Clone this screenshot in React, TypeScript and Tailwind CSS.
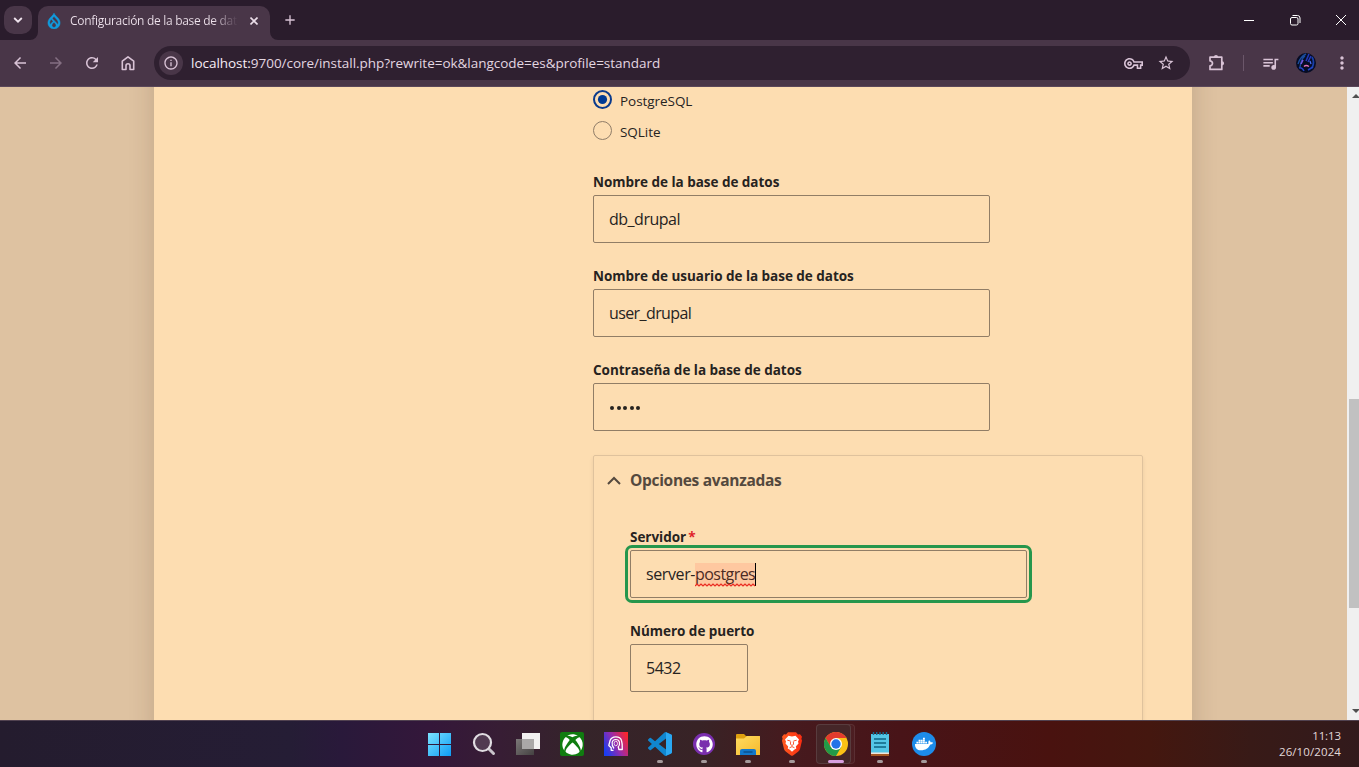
import type { ReactNode } from "react";
import { FaXbox, FaGithub, FaDocker } from "react-icons/fa";
import { SiDrupal } from "react-icons/si";
import {
  MdArrowBack,
  MdArrowForward,
  MdRefresh,
  MdInfoOutline,
  MdOutlineVpnKey,
  MdStarBorder,
  MdQueueMusic,
  MdMoreVert,
  MdAdd,
} from "react-icons/md";

function TitleBar() {
  return (
    <div className="flex h-10 shrink-0 bg-[#2a1c2c] pl-1">
      <div className="mt-1.5 flex h-7 w-7 items-center justify-center rounded-[10px] bg-[#493648] text-[#f0e4ee]">
        <svg width="10" height="6" viewBox="0 0 10 6" fill="none" stroke="currentColor" strokeWidth="1.800">
          <path d="M1.200 1L5 4.700 8.800 1" />
        </svg>
      </div>
      <div className="relative ml-1.5 mt-1.5 flex h-[34px] w-[232px] items-center rounded-t-[10px] bg-[#493648] pb-[5px]">
        <svg className="absolute -left-2 bottom-0" width="8" height="8" viewBox="0 0 8 8">
          <path d="M8 0v8H0a8 8 0 0 0 8-8z" fill="#493648" />
        </svg>
        <svg className="absolute -right-2 bottom-0" width="8" height="8" viewBox="0 0 8 8">
          <path d="M0 0v8h8a8 8 0 0 1-8-8z" fill="#493648" />
        </svg>
        <SiDrupal className="ml-2 text-[#109cde]" size={16} stroke="currentColor" strokeWidth={0.7} />
        <span className="ml-2 w-[168px] overflow-hidden whitespace-nowrap bg-gradient-to-r from-[#eee2ec] from-85% to-[#493648] bg-clip-text text-[12px] tracking-[-0.3px] text-transparent">
          Configuración de la base de datos
        </span>
        <svg className="ml-3" width="8" height="8" viewBox="0 0 8 8" stroke="#eadde8" strokeWidth="1.600">
          <path d="M.5.5l7 7M7.500.5l-7 7" />
        </svg>
      </div>
      <MdAdd className="ml-3 mt-[12px] text-[#d9c3d6]" size={16} />
      <div className="ml-auto flex h-10 items-center text-white">
        <svg width="12" height="12" viewBox="0 0 12 12" className="mr-[34px]">
          <path d="M1 6.500h10" stroke="#fff" />
        </svg>
        <svg width="12" height="12" viewBox="0 0 12 12" fill="none" stroke="#fff" className="mr-[34px]">
          <rect x="1.500" y="3.500" width="7.500" height="7.500" rx="1.500" />
          <path d="M3.500 1.500H8.500a2.500 2.500 0 0 1 2.500 2.500v5" />
        </svg>
        <svg width="12" height="12" viewBox="0 0 12 12" stroke="#fff" className="mr-[12px]">
          <path d="M1 1l10 10M11 1L1 11" />
        </svg>
      </div>
    </div>
  );
}

function Avatar() {
  return (
    <svg width="20" height="20" viewBox="0 0 20 20">
      <clipPath id="avatar">
        <circle cx="10" cy="10" r="10" />
      </clipPath>
      <g clipPath="url(#avatar)" fill="none">
        <rect width="20" height="20" fill="#060c24" />
        <path d="M2 11Q4 4 10 1M4 14Q5 6 9 3" stroke="#1a4c9c" strokeWidth="1.400" />
        <path d="M10 8L13 1M12 9l3-6" stroke="#2337b5" strokeWidth="1.600" />
        <path d="M16 4q3 5 0 11" stroke="#183fa8" strokeWidth="1.800" />
        <path d="M3 15q3-1 5 3M12 17l5-3" stroke="#1f43c4" strokeWidth="1.500" />
        <path d="M5 11l2-4" stroke="#7a55e0" strokeWidth="1.500" />
        <path d="M8 13.500q2-2 5 0" stroke="#e070b8" strokeWidth="1.300" />
        <path d="M14 8l1 3" stroke="#4a6cf0" strokeWidth="1.300" />
      </g>
    </svg>
  );
}

function HomeIcon() {
  return (
    <svg className="ml-[18px]" width="18" height="18" viewBox="0 0 18 18" fill="none" stroke="currentColor" strokeWidth="1.600">
      <path d="M3.300 7.200L9 2.800l5.700 4.400v8.300h-3.700v-3.700a2 2 0 0 0-4 0v3.700H3.300z" strokeLinejoin="round" />
    </svg>
  );
}

function ExtensionIcon() {
  return (
    <svg className="ml-[18px]" width="18" height="18" viewBox="0 0 18 18">
      <path
        d="M2 3.200h11.800v12.200H2v-3.600a2.500 2.500 0 0 0 0-5z"
        fill="none"
        stroke="currentColor"
        strokeWidth="1.700"
        strokeLinejoin="round"
      />
      <path d="M5.900 3a2.100 2.100 0 0 1 4.200 0zM14 7.200a2.100 2.100 0 0 1 0 4.200z" fill="currentColor" />
    </svg>
  );
}

function Toolbar() {
  return (
    <div className="flex h-[47px] shrink-0 items-center border-b border-[#5a4759] bg-[#493648] text-[#d9c3d6]">
      <MdArrowBack className="ml-[11px]" size={18} />
      <MdArrowForward className="ml-[18px] text-[#846f82]" size={18} />
      <MdRefresh className="ml-[18px]" size={18} />
      <HomeIcon />
      <div className="ml-[17px] flex h-[34px] w-[1036px] items-center rounded-full bg-[#2f2030] pl-[5px]">
        <div className="flex h-6 w-6 items-center justify-center rounded-full bg-[#493648]">
          <MdInfoOutline size={16} />
        </div>
        <span className="ml-2 mt-px whitespace-nowrap text-[13.500px] tracking-[-0.03px] text-[#e3d6e1]">
          <span className="text-[#f7edf5]">localhost:</span>9700/core/install.php?rewrite=ok&amp;langcode=es&amp;profile=standard
        </span>
        <MdOutlineVpnKey className="ml-auto" size={19} />
        <MdStarBorder className="ml-[14px] mr-[15px]" size={18} />
      </div>
      <ExtensionIcon />
      <div className="ml-[17px] h-4 w-px bg-[#6b576a]" />
      <MdQueueMusic className="ml-[17px]" size={19} />
      <div className="ml-4">
        <Avatar />
      </div>
      <MdMoreVert className="ml-4" size={20} />
    </div>
  );
}

function Radio({ label, checked }: { label: string; checked?: boolean }) {
  return (
    <div className="flex h-[31px] items-center">
      <svg width="19" height="19" viewBox="0 0 19 19" fill="none" className="-mt-0.5">
        {checked ? (
          <>
            <circle cx="9.500" cy="9.500" r="8.500" stroke="#0a3a8c" strokeWidth="2" />
            <circle cx="9.500" cy="9.500" r="4.600" fill="#003a94" />
          </>
        ) : (
          <circle cx="9.500" cy="9.500" r="9" stroke="#8f7c68" />
        )}
      </svg>
      <span className="ml-2 mt-px text-[13.500px] tracking-[-0.05px]">{label}</span>
    </div>
  );
}

function Field({ label, required, width, focused, children }: {
  label: string;
  required?: boolean;
  width: string;
  focused?: boolean;
  children: ReactNode;
}) {
  return (
    <div className="mb-6 h-[70px]">
      <div className="h-[22px] whitespace-nowrap text-[13.500px] font-bold leading-[19px] tracking-[-0.03px]">
        {label}
        {required && <span className="ml-[2px] text-[#e01f2b]">*</span>}
      </div>
      <div
        className={`flex h-12 items-center rounded-[2px] border border-[#917d66] px-[15px] text-[16px] ${width} ${
          focused ? "outline-3 outline-offset-2 outline-[#26964c]" : ""
        }`}
      >
        {children}
      </div>
    </div>
  );
}

function Page() {
  return (
    <div className="flex h-[633px] shrink-0 overflow-hidden bg-[#dec2a1] text-[#26231f]">
      <div className="-my-6 ml-[154px] w-[1038px] bg-[#fdddb1] pl-[439px] pt-6 shadow-[0_0_24px_rgba(60,40,20,0.18)]">
        <div className="-mt-[2px] mb-[28px]">
          <Radio label="PostgreSQL" checked />
          <Radio label="SQLite" />
        </div>
        <div className="-mt-[2px]">
          <Field label="Nombre de la base de datos" width="w-[397px]">
            <span className="tracking-[-0.5px]">db_drupal</span>
          </Field>
          <Field label="Nombre de usuario de la base de datos" width="w-[397px]">
            <span className="tracking-[-0.6px]">user_drupal</span>
          </Field>
          <Field label="Contraseña de la base de datos" width="w-[397px]">
            <span className="flex gap-[2.500px] pl-px pt-0.5">
              {[0, 1, 2, 3, 4].map((dot) => (
                <span key={dot} className="h-1 w-1 rounded-full bg-[#26231f]" />
              ))}
            </span>
          </Field>
        </div>
        <div className="h-[320px] w-[550px] rounded-[2px] border border-[#dfc29d] pl-9 shadow-[0_2px_4px_rgba(0,0,0,0.08)]">
          <div className="-ml-[23px] flex h-[49px] items-center text-[#54493e]">
            <svg width="14" height="9" viewBox="0 0 14 9" fill="none" stroke="#54493e" strokeWidth="2" className="-mt-px">
              <path d="M1 8l6-6 6 6" />
            </svg>
            <span className="mt-px ml-[9px] text-[15.500px] font-bold tracking-[-0.31px]">Opciones avanzadas</span>
          </div>
          <div className="mt-[23px]">
            <Field label="Servidor" required width="w-[397px]" focused>
              <span className="tracking-[-0.4px]">server-</span>
              <span className="relative h-[23px] border-r border-black bg-[#fec8a0] leading-[23px] tracking-[-0.55px] text-[#4c2b24]">
                postgres
                <svg className="absolute bottom-[-1px] left-0" width="61" height="4" viewBox="0 0 61 4" fill="none">
                  <path
                    d="M0 3l2-2 2 2 2-2 2 2 2-2 2 2 2-2 2 2 2-2 2 2 2-2 2 2 2-2 2 2 2-2 2 2 2-2 2 2 2-2 2 2 2-2 2 2 2-2 2 2 2-2 2 2 2-2 2 2 2-2 2 2"
                    stroke="#ea2d23"
                    strokeWidth="1.200"
                  />
                </svg>
              </span>
            </Field>
            <Field label="Número de puerto" width="w-[118px]">
              <span className="tracking-[-0.5px]">5432</span>
            </Field>
          </div>
        </div>
      </div>
      <div className="ml-auto flex h-full w-3 flex-col items-end bg-[#f0f0f0]">
        <svg className="mt-[7px]" width="7" height="4" viewBox="0 0 7 4">
          <path d="M0 4l4-4 4 4z" fill="#505050" />
        </svg>
        <div className="mt-[301px] h-[209px] w-[10px] bg-[#c1c1c1]" />
        <svg className="mb-[7px] mt-auto" width="7" height="4" viewBox="0 0 7 4">
          <path d="M0 0h8L4 4z" fill="#505050" />
        </svg>
      </div>
    </div>
  );
}

function StartIcon() {
  return (
    <svg width="24" height="24" viewBox="0 0 24 24">
      <linearGradient id="start" x1="0" y1="0" x2="24" y2="24" gradientUnits="userSpaceOnUse">
        <stop stopColor="#7ee4ff" />
        <stop offset="1" stopColor="#0b9bf5" />
      </linearGradient>
      <path d="M0 1h11v11H0zM12 1h11v11H12zM0 13h11v11H0zM12 13h11v11H12z" fill="url(#start)" />
    </svg>
  );
}

function SearchIcon() {
  return (
    <svg width="24" height="24" viewBox="0 0 24 24" fill="none">
      <path d="M16 16l5.500 5.500" stroke="#c9c4cb" strokeWidth="3" strokeLinecap="round" />
      <circle cx="10.500" cy="10.500" r="8.500" fill="#513a51" stroke="#e1dde2" strokeWidth="2.200" />
    </svg>
  );
}

function TaskViewIcon() {
  return (
    <svg width="24" height="24" viewBox="0 0 24 24">
      <linearGradient id="viewBack" x1="0" y1="0" x2="1" y2="1">
        <stop stopColor="#7c7878" />
        <stop offset="1" stopColor="#444141" />
      </linearGradient>
      <path d="M6 1h18v16H6z" fill="#f1f0f0" />
      <path d="M0 7h18v16H0z" fill="url(#viewBack)" />
      <path d="M6 7h12v10H6z" fill="#aaa8a8" />
    </svg>
  );
}

function HeadIcon() {
  return (
    <svg width="24" height="24" viewBox="0 0 24 24" fill="none">
      <linearGradient id="head" x1="0" y1="0.700" x2="1" y2="0.200">
        <stop stopColor="#1b3df0" />
        <stop offset="0.500" stopColor="#9b2ba8" />
        <stop offset="1" stopColor="#fb262c" />
      </linearGradient>
      <path d="M0 0h24v24H0z" fill="url(#head)" />
      <path
        d="M9.500 18.300H7.200v-2.500L4.800 13.500 6 8.800C7.500 3.500 16 3.500 17.500 8.500q1 3 .8 9h-3.500l-.5-3"
        stroke="#fff"
        strokeWidth="1.300"
        strokeLinejoin="round"
      />
      <path
        d="M10 16.500c-3-3.500-2.500-9 1.700-9s5 4.500 2.300 8"
        stroke="#fff"
        strokeWidth="1.200"
      />
      <ellipse cx="11.800" cy="11.500" rx="1.700" ry="2.300" stroke="#fff" strokeWidth="0.800" />
    </svg>
  );
}

function CodeIcon() {
  return (
    <svg width="24" height="24" viewBox="0 0 24 24">
      <path
        d="M23.150 2.587L18.210.210a1.494 1.494 0 0 0-1.705.290l-9.460 8.630-4.120-3.128a.999.999 0 0 0-1.276.057L.327 7.261A1 1 0 0 0 .326 8.740L3.899 12 .326 15.260a1 1 0 0 0 .001 1.479L1.650 17.940a.999.999 0 0 0 1.276.057l4.120-3.128 9.460 8.630a1.492 1.492 0 0 0 1.704.290l4.942-2.377A1.500 1.500 0 0 0 24 20.060V3.939a1.500 1.500 0 0 0-.850-1.352zm-5.146 14.861L10.826 12l7.178-5.448v10.896z"
        fill="#1086cf"
      />
      <path d="M18 .2l5.150 2.387A1.500 1.500 0 0 1 24 3.940v16.120a1.500 1.500 0 0 1-.850 1.352L18 23.800z" fill="#2aa8f2" />
    </svg>
  );
}

function FolderIcon() {
  return (
    <svg width="24" height="24" viewBox="0 0 24 24">
      <linearGradient id="folder" x1="0" y1="0" x2="1" y2="1">
        <stop stopColor="#ffdc61" />
        <stop offset="1" stopColor="#f5b92c" />
      </linearGradient>
      <path d="M0 3q0-1 1-1h7l2 2h13q1 0 1 1v6H0z" fill="#dfa00f" />
      <path d="M0 6.500h8l3-2.500h12.500l.5.500V23H0z" fill="url(#folder)" />
      <path d="M4 23v-4q0-2 2-2h12q2 0 2 2v4z" fill="#1378ca" />
      <path d="M7.500 20h9" stroke="#0b477e" strokeWidth="1.200" />
    </svg>
  );
}

function BraveIcon() {
  return (
    <svg width="24" height="24" viewBox="0 0 24 24">
      <linearGradient id="brave" x1="0" x2="1">
        <stop stopColor="#ff5a1f" />
        <stop offset="1" stopColor="#fb2d12" />
      </linearGradient>
      <path
        d="M8 .300h8l2 2.200 2-.3 2 2.600-.6 1.900.6 2L20 17q-.5 1.700-2 2.800l-5 3.700q-1 .7-2 0l-5-3.700Q4.500 18.700 4 17L2 8.700l.6-2L2 4.800l2-2.600 2 .3z"
        fill="url(#brave)"
      />
      <path
        d="M12 4.500l3.500-.8L19 7.500l-1 2 .5 2-2.700 3 .5 2-1.800 1L12 19.800l-2.500-2.300-1.800-1 .5-2-2.700-3 .5-2-1-2 3.500-3.800z"
        fill="#fff"
      />
      <path
        d="M7.300 8.200l3.200.8M16.700 8.200l-3.200.8M10.700 9.500l-.3 2.800 1.600 1.200 1.600-1.200-.3-2.800M9.500 15.800l2.500-1.200 2.500 1.200"
        fill="none"
        stroke="#fb4218"
        strokeWidth="0.900"
      />
    </svg>
  );
}

function ChromeIcon() {
  return (
    <svg width="24" height="24" viewBox="0 0 24 24">
      <circle cx="12" cy="12" r="12" fill="#fbc116" />
      <path d="M1.600 6A12 12 0 0 1 22.400 6H12L6.800 15z" fill="#e33b2e" />
      <path d="M1.600 6A12 12 0 0 0 12 24l5.200-9L12 12 6.800 15z" fill="#229a48" />
      <circle cx="12" cy="12" r="6" fill="#fff" />
      <circle cx="12" cy="12" r="4.700" fill="#2373e8" />
    </svg>
  );
}

function NotepadIcon() {
  return (
    <svg width="24" height="24" viewBox="0 0 24 24">
      <path d="M3 21h18v3H3z" fill="#a55724" />
      <path d="M3 20h18v2H3z" fill="#efe6dd" />
      <path d="M3 2h18v18.500H3z" fill="#54c6e6" />
      <path d="M5.500 0v3M8.700 0v3M12 0v3M15.200 0v3M18.500 0v3" stroke="#146e91" strokeWidth="1.400" />
      <path d="M6 7h12M6 11h12M6 15h12" stroke="#0e6483" strokeWidth="1.700" />
    </svg>
  );
}

function Task({ children, open, active }: { children: ReactNode; open?: boolean; active?: boolean }) {
  return (
    <div className="relative flex h-[46px] w-11 flex-col items-center pt-[11px]">
      {active && (
        <>
          <div className="absolute left-[5px] top-[3px] h-10 w-9 rounded-[4px] border border-white/8 bg-white/3" />
          <div className="absolute left-[2px] top-[3px] h-10 w-[35px] rounded-[4px] border border-white/10 bg-[#452628]" />
        </>
      )}
      <div className="relative flex h-6 w-6 items-center justify-center">{children}</div>
      {open && (
        <div
          className={
            active
              ? "relative mt-1 h-[3px] w-4 rounded-full bg-[#d9a0e0]"
              : "mt-1 h-[3px] w-1.5 rounded-full bg-[#a59a9b]"
          }
        />
      )}
    </div>
  );
}

function Taskbar() {
  return (
    <div className="flex h-[47px] shrink-0 border-t border-[#514250] bg-[linear-gradient(90deg,#241c2e_0px,#251d35_290px,#29193a_340px,#34173a_430px,#371d34_500px,#35242a_580px,#382326_700px,#461a1e_790px,#481418_900px,#49120f_1050px,#44170f_1150px,#381a17_1250px,#321a1c_1359px)]">
      <div className="ml-[418px] flex">
        <Task><StartIcon /></Task>
        <Task><SearchIcon /></Task>
        <Task><TaskViewIcon /></Task>
        <Task>
          <span className="flex h-6 w-6 items-center justify-center rounded-[2px] bg-[#107c10]">
            <FaXbox size={21} className="text-white" />
          </span>
        </Task>
        <Task><HeadIcon /></Task>
        <Task open><CodeIcon /></Task>
        <Task open>
          <span className="flex h-[22px] w-[22px] items-center justify-center rounded-full bg-[#7a2fae]">
            <FaGithub size={17} className="text-white" />
          </span>
        </Task>
        <Task open><FolderIcon /></Task>
        <Task open><BraveIcon /></Task>
        <Task open active><ChromeIcon /></Task>
        <Task open><NotepadIcon /></Task>
        <Task open>
          <span className="flex h-6 w-6 items-center justify-center rounded-full bg-[#1d8cea]">
            <FaDocker size={18} className="text-white" />
          </span>
        </Task>
      </div>
      <div className="ml-auto mr-[18px] mt-[7px] text-right text-[11.500px] leading-4 text-[#e2d9da]">
        <div className="tracking-[-0.1px]">11:13</div>
        <div className="tracking-[0.1px]">26/10/2024</div>
      </div>
    </div>
  );
}

export default function App() {
  return (
    <div className="flex h-[767px] w-[1359px] flex-col overflow-hidden font-['Open_Sans','Noto_Sans',sans-serif]">
      <TitleBar />
      <Toolbar />
      <Page />
      <Taskbar />
    </div>
  );
}
